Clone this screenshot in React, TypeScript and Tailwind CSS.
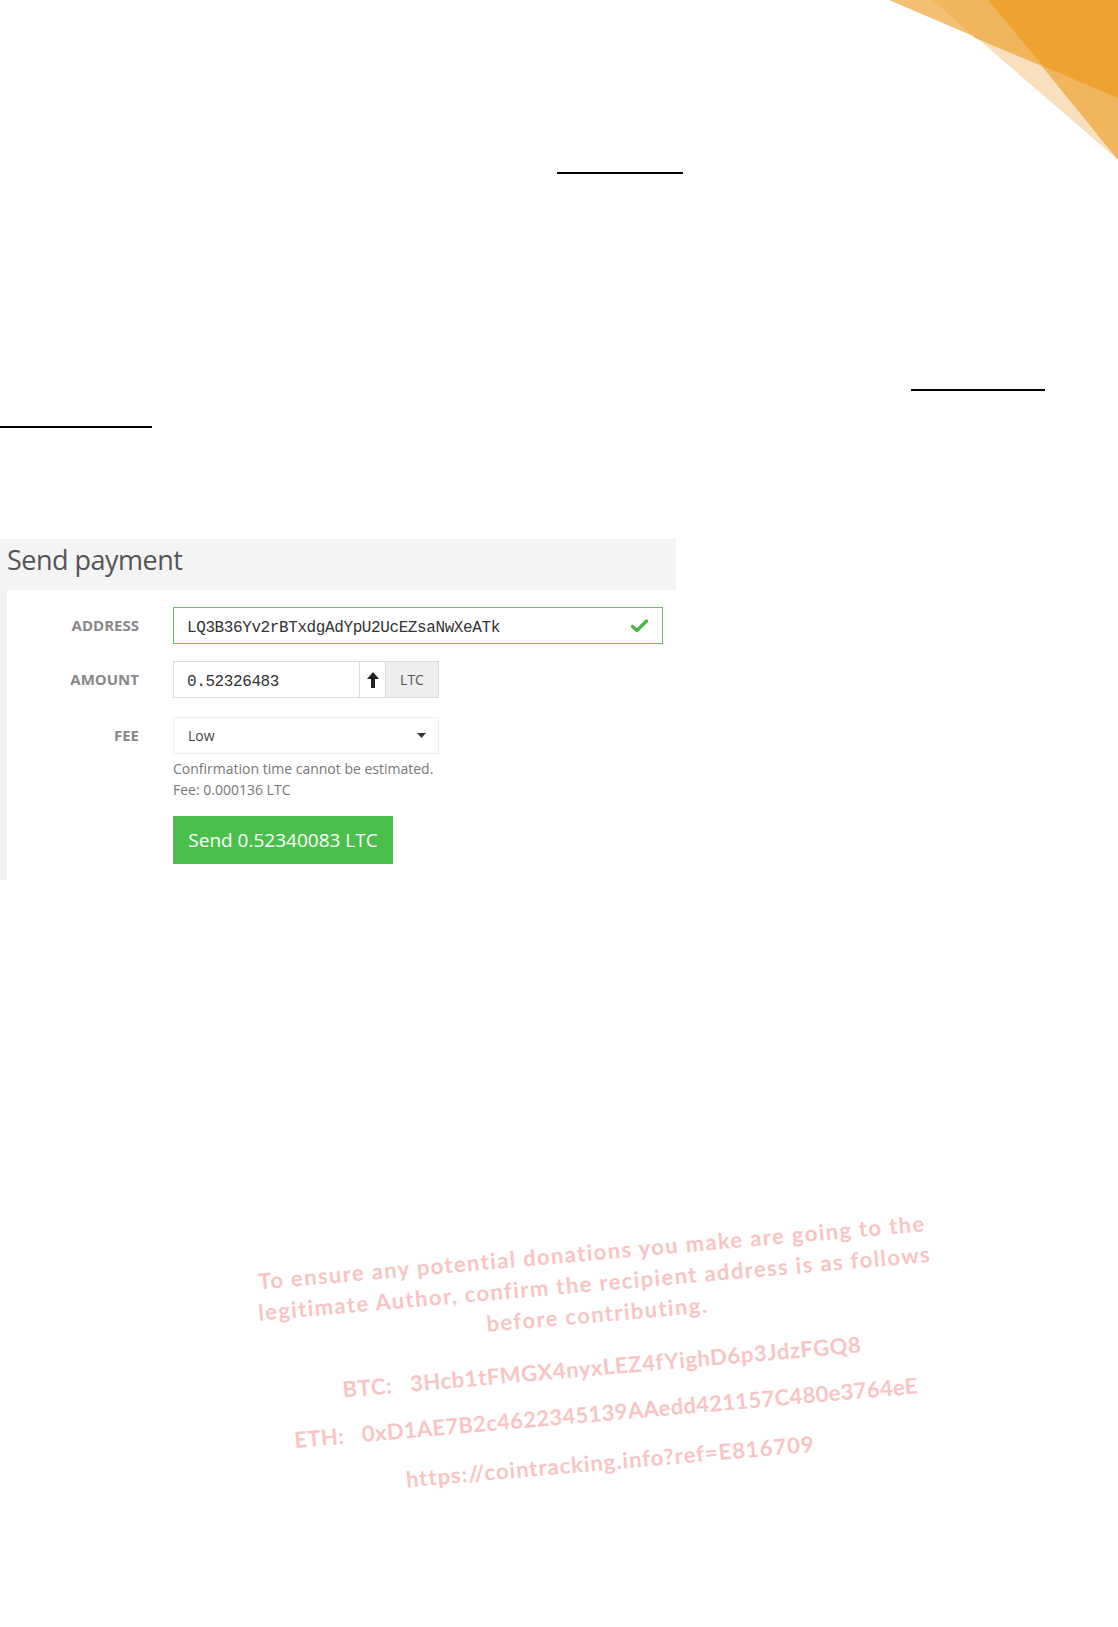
import React from "react";

const Corner = () => (
  // orange folded corner, drawn in page coordinates
  <svg className="absolute right-0 top-0" width="229" height="161" viewBox="889 0 229 161">
    <polygon points="933,0 1118,0 1118,160" fill="#f9dfbb" />
    <polygon points="889,0 1118,0 1118,98" fill="#f3bf73" />
    <polygon points="933,0 1118,0 1118,98 975,38" fill="#f1b55c" />
    <polygon points="988,0 1118,0 1118,160" fill="#f1b55c" />
    <polygon points="988,0 1118,0 1118,98 1043,66" fill="#eea331" />
  </svg>
);

const CheckIcon = () => (
  <svg width="17" height="14" viewBox="0 0 17 14">
    <path d="M1.5 7.5 L6 11.5 L15.5 2" fill="none" stroke="#4cb944" strokeWidth="3.4" strokeLinecap="round" strokeLinejoin="round" />
  </svg>
);

const ArrowUp = () => (
  <svg width="12" height="16" viewBox="0 0 12 16">
    <path d="M6 0 L12 7 L8 7 L8 16 L4 16 L4 7 L0 7 Z" fill="#222" />
  </svg>
);

const Caret = () => (
  <svg width="9" height="5" viewBox="0 0 9 5">
    <path d="M0 0 L9 0 L4.5 5 Z" fill="#333" />
  </svg>
);

const Label = ({ children }: { children: React.ReactNode }) => (
  <div className="w-[132px] text-right text-[15px] font-bold text-[#888]">{children}</div>
);

export default function App() {
  return (
    <div className="relative min-h-[1627px] w-[1118px] overflow-hidden bg-white pt-[172px] font-['Open_Sans',sans-serif]">
      <Corner />

      <div className="ml-[557px] h-[2px] w-[126px] bg-black" />
      <div className="ml-[911px] mt-[215px] h-[2px] w-[134px] bg-black" />
      <div className="mt-[35px] h-[2px] w-[152px] bg-black" />

      <div className="mt-[111px] w-[676px]">
        <div className="h-[51px] bg-[#f4f4f4] pl-[7px] text-[27px] leading-[42px] tracking-[-0.5px] text-[#555]">Send payment</div>
        <div className="h-[290px] border-l-[7px] border-l-[#f3f3f3] pt-[17px]">
          <div className="flex items-center">
            <Label>ADDRESS</Label>
            <div className="ml-[34px] flex h-[37px] w-[490px] items-center justify-between border border-[#62c462] pl-[13px] pr-[14px]">
              <span className="pt-[5px] font-['Liberation_Mono',monospace] text-[16px] tracking-[-0.4px] text-[#333]">
                LQ3B36Yv2rBTxdgAdYpU2UcEZsaNwXeATk
              </span>
              <CheckIcon />
            </div>
          </div>

          <div className="mt-[17px] flex items-center">
            <Label>AMOUNT</Label>
            <div className="ml-[34px] flex h-[37px] items-stretch">
              <div className="flex w-[187px] items-center border border-[#dddddd] pl-[13px] pt-[5px] font-['Liberation_Mono',monospace] text-[16px] tracking-[-0.4px] text-[#333]">
                0.52326483
              </div>
              <div className="flex w-[25px] items-center justify-center border-y border-[#dddddd]">
                <ArrowUp />
              </div>
              <div className="flex w-[54px] items-center justify-center border border-[#dddddd] bg-[#eeeeee] text-[14px] text-[#555]">
                LTC
              </div>
            </div>
          </div>

          <div className="mt-[19px] flex items-center">
            <Label>FEE</Label>
            <div className="ml-[34px] flex h-[37px] w-[266px] items-center justify-between border border-[#eeeeee] pl-[14px] pr-[12px] text-[14px] text-[#444]">
              <span>Low</span>
              <Caret />
            </div>
          </div>

          <div className="ml-[166px] mt-[4px] text-[14px] leading-[21px] text-[#777]">
            <div>Confirmation time cannot be estimated.</div>
            <div>Fee: 0.000136 LTC</div>
          </div>

          <button className="ml-[166px] mt-[16px] flex h-[48px] w-[220px] items-center justify-center bg-[#4bbf4b] text-[19px] text-white">
            Send 0.52340083 LTC
          </button>
        </div>
      </div>

      <div className="absolute left-[221px] top-[1236px] w-[760px] -rotate-[5deg] text-center font-['Lato',sans-serif] text-[22px] font-bold text-[#f9c4c4]">
        <div className="leading-[31px] tracking-[1.4px]">
          <div>To ensure any potential donations you make are going to the</div>
          <div>legitimate Author, confirm the recipient address is as follows</div>
          <div>before contributing.</div>
        </div>
        <div className="mt-[22px] leading-[31px] tracking-[0.6px]">
          <span className="mr-[18px]">BTC:</span>3Hcb1tFMGX4nyxLEZ4fYighD6p3JdzFGQ8
        </div>
        <div className="mt-[15px] leading-[31px] tracking-[0.35px]">
          <span className="mr-[18px]">ETH:</span>0xD1AE7B2c4622345139AAedd421157C480e3764eE
        </div>
        <div className="mt-[18px] leading-[31px] tracking-[1px]">https://cointracking.info?ref=E816709</div>
      </div>
    </div>
  );
}
